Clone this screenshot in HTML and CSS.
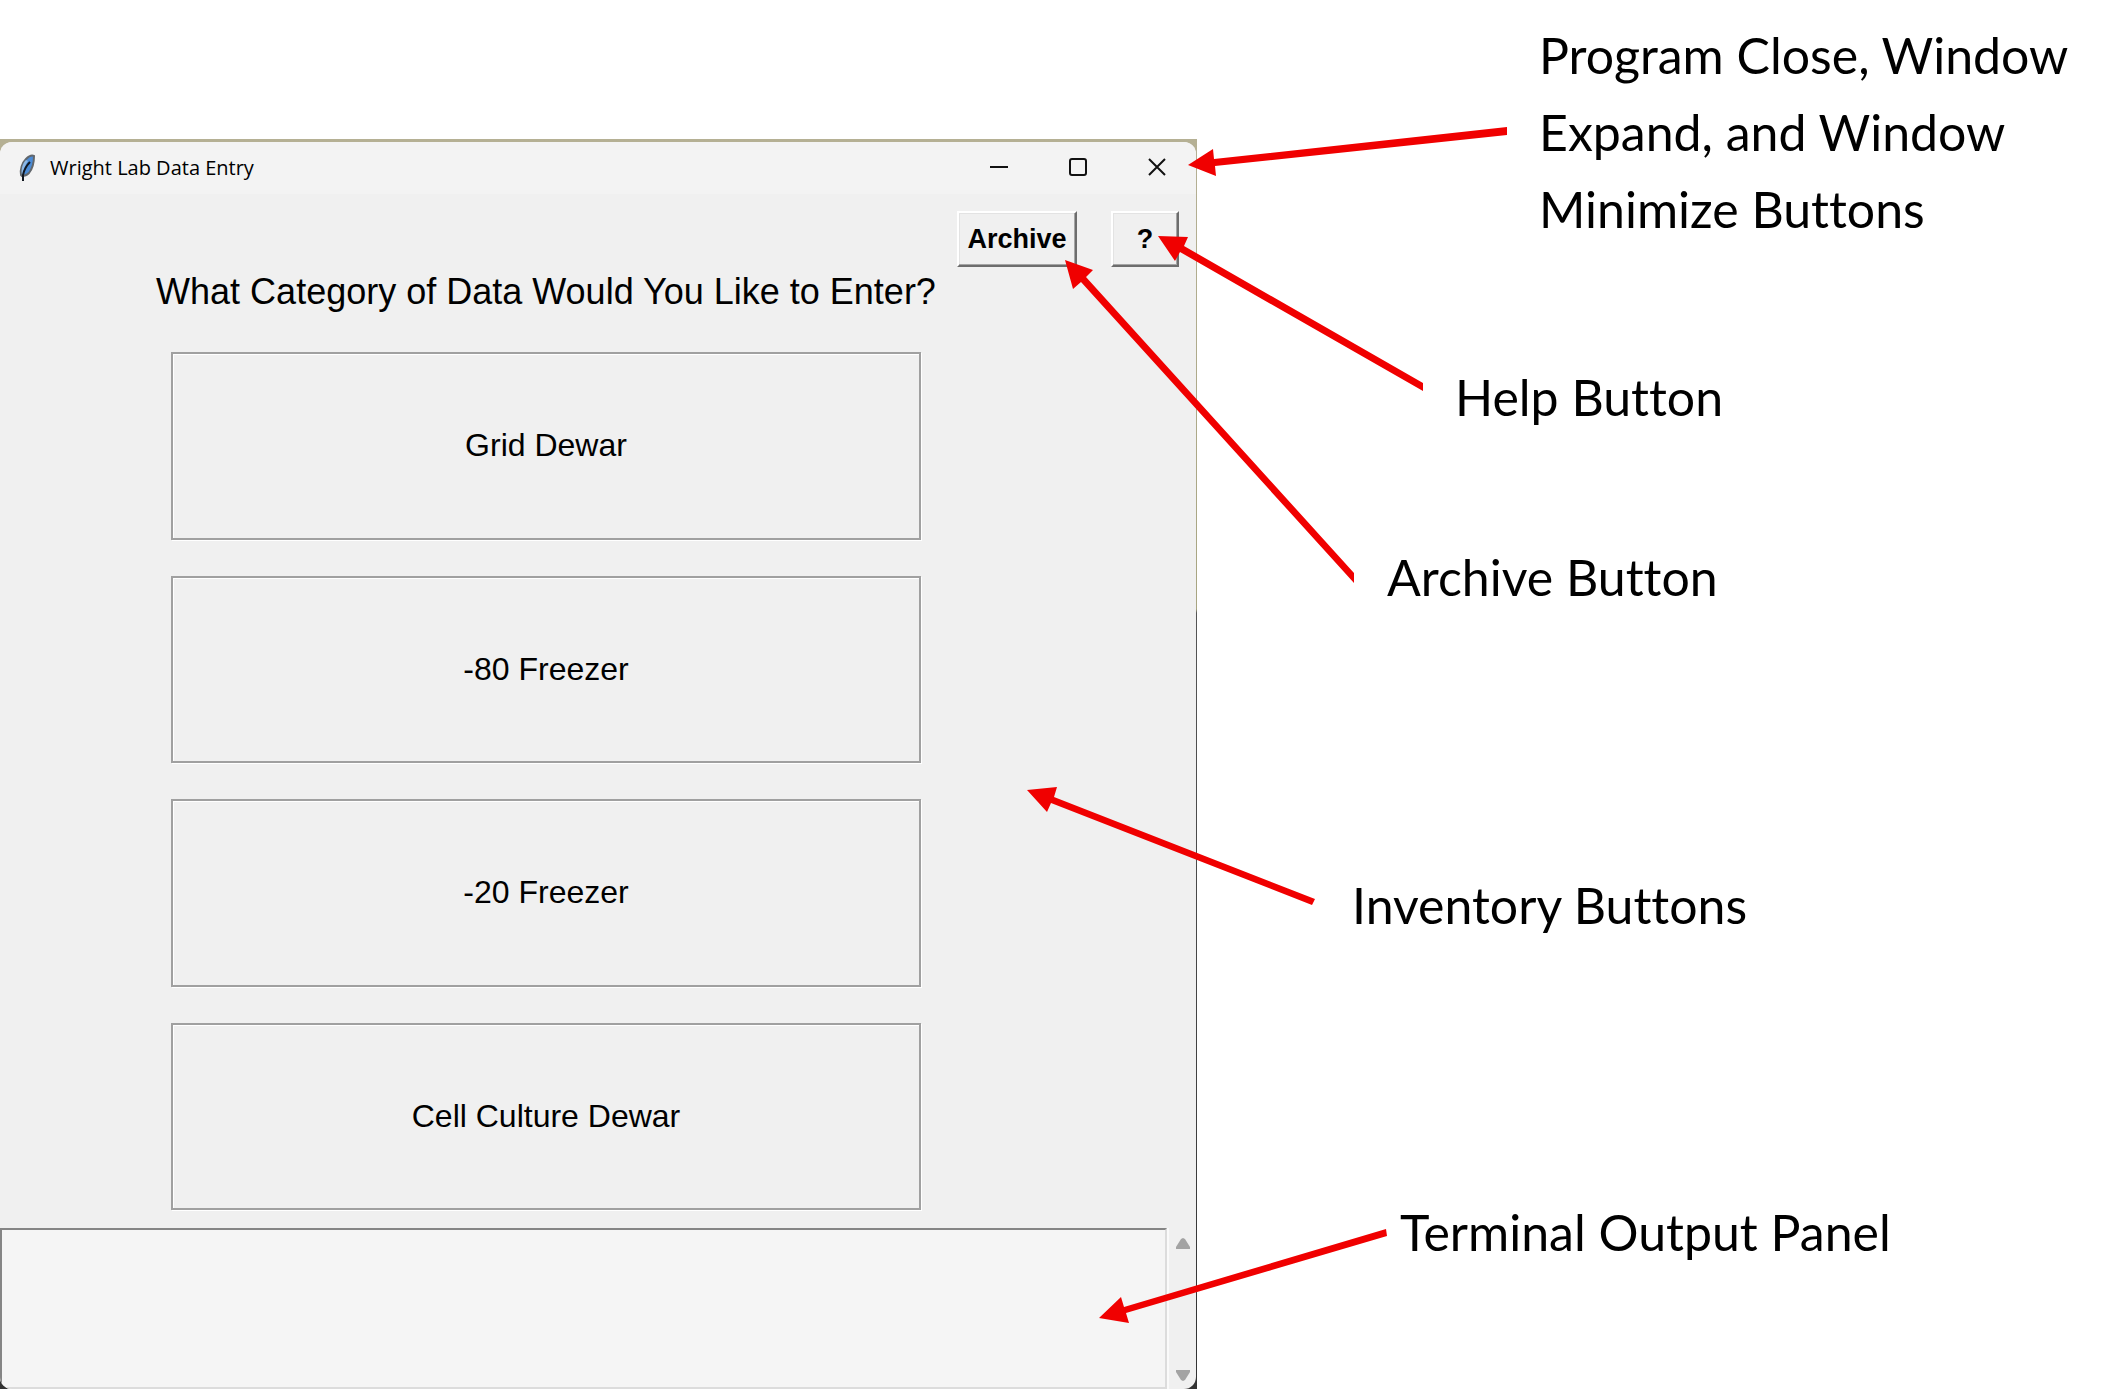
FILE: index.html
```html
<!DOCTYPE html>
<html lang="en">
<head>
<meta charset="utf-8">
<title>Wright Lab Data Entry</title>
<link rel="stylesheet" href="styles.css">
</head>
<body>
<main class="guide">
  <div class="desktop">
    <section class="window">
      <header class="titlebar">
        <svg class="feather" viewBox="0 0 18 30" aria-hidden="true">
          <path d="M3 22C2 17 4 10 8 6C11 3 14 2 16 3C16 9 15 15 11 20C9 22 6 23 4 23Z" fill="#4a8bd6" stroke="#62676c" stroke-width="2"/>
          <path d="M8 7C4 11 3 17 4 22L5 22C5 17 7 12 10 8Z" fill="#8cb8e6"/>
          <path d="M5 28V22C6 17 9 12 12 9" fill="none" stroke="#10161f" stroke-width="2"/>
        </svg>
        <h1 class="title">Wright Lab Data Entry</h1>
        <button class="control" aria-label="Minimize"><svg viewBox="0 0 18 18"><path d="M0 9H18"/></svg></button>
        <button class="control" aria-label="Expand"><svg viewBox="0 0 18 18"><rect x="1" y="1" width="16" height="16" rx="2"/></svg></button>
        <button class="control" aria-label="Close"><svg viewBox="0 0 18 18"><path d="M1 1L17 17M17 1L1 17"/></svg></button>
      </header>
      <div class="toolbar">
        <button class="tool">Archive</button>
        <button class="tool help">?</button>
      </div>
      <h2 class="question">What Category of Data Would You Like to Enter?</h2>
      <div class="inventory">
        <button class="choice">Grid Dewar</button>
        <button class="choice">-80 Freezer</button>
        <button class="choice">-20 Freezer</button>
        <button class="choice">Cell Culture Dewar</button>
      </div>
      <div class="terminal">
        <textarea class="output" aria-label="Terminal output" readonly></textarea>
        <div class="scroll">
          <svg viewBox="0 0 14 11" aria-hidden="true"><path d="M0 11V9L5 1L7 0L9 1L14 9V11Z"/></svg>
          <svg viewBox="0 0 14 11" aria-hidden="true"><path d="M0 0V2L5 10L7 11L9 10L14 2V0Z"/></svg>
        </div>
      </div>
    </section>
  </div>
  <aside class="notes">
    <p class="note note-window">Program Close, Window<br>Expand, and Window<br>Minimize Buttons</p>
    <p class="note note-help">Help Button</p>
    <p class="note note-archive">Archive Button</p>
    <p class="note note-inventory">Inventory Buttons</p>
    <p class="note note-terminal">Terminal Output Panel</p>
  </aside>
  <svg class="arrows" viewBox="0 0 2120 1389" aria-hidden="true">
    <path d="M1188 165L1213 149L1214 159L1507 127V135L1215 166L1216 176Z"/>
    <path d="M1158 236L1188 237L1184 246L1423 383V391L1180 252L1175 261Z"/>
    <path d="M1065 260L1093 270L1086 277L1354 573V583L1081 282L1073 289Z"/>
    <path d="M1027 790L1057 787L1054 797L1315 899L1312 905L1051 803L1047 812Z"/>
    <path d="M1099 1318L1121 1297L1124 1307L1386 1229L1387 1236L1126 1313L1129 1323Z"/>
  </svg>
</main>
</body>
</html>
```
FILE: styles.css
```css
* {
  box-sizing: border-box;
}

body {
  margin: 0;
  background: #fff;
  color: #000;
}

button {
  margin: 0;
  padding: 0;
  color: #000;
  font-family: "Liberation Sans", Arial, sans-serif;
}

.guide {
  position: relative;
  display: grid;
  grid-template-columns: 1197fr 923fr;
  min-height: 100vh;
}

.desktop {
  display: flex;
  margin-top: 139px;
  padding: 3px 1px 0 0;
  background: linear-gradient(#b5b094, #a8a581 470px, #555 474px, #333);
}

.window {
  display: flex;
  flex: 1;
  flex-direction: column;
  overflow: hidden;
  border-radius: 12px;
  background: #f0f0f0;
}

.titlebar {
  display: flex;
  align-items: center;
  height: 52px;
  padding: 0 0 0 18px;
  background: #f3f3f3;
}

.feather {
  width: 18px;
  height: 30px;
}

.title {
  flex: 1;
  margin: 0 0 0 14px;
  font: 400 20px/28px "Open Sans", "Noto Sans", sans-serif;
}

.control {
  width: 79px;
  height: 48px;
  border: 0;
  background: none;
}

.control svg {
  width: 18px;
  height: 18px;
  fill: none;
  stroke: #111;
  stroke-width: 2;
}

.toolbar {
  display: flex;
  justify-content: flex-end;
  gap: 34px;
  padding: 17px 17px 0 0;
}

.tool {
  width: 120px;
  height: 56px;
  border: 2px solid;
  border-color: #fff #6d6d6d #6d6d6d #fff;
  background: #f0f0f0;
  box-shadow: inset -1px -1px #a5a5a5, inset 1px 1px #e3e3e3;
  font-size: 27px;
  font-weight: 700;
}

.help {
  width: 68px;
}

.question {
  width: 750px;
  margin: 5px 0 0 171px;
  display: flex;
  justify-content: center;
  white-space: nowrap;
  font: 400 36px/40px "Liberation Sans", Arial, sans-serif;
}

.inventory {
  display: flex;
  flex: 1;
  flex-direction: column;
  gap: 36px;
  width: 750px;
  margin: 40px 0 18px 171px;
}

.choice {
  flex: 1;
  border: 2px solid #a0a0a0;
  background: #f0f0f0;
  box-shadow: 1px 1px #fff, inset 1px 1px #fff;
  font-size: 32px;
}

.terminal {
  display: flex;
  height: 161px;
}

.output {
  flex: 1;
  border: 2px solid;
  border-color: #858585 #dcdcdc #dcdcdc #858585;
  background: #f5f5f5;
  resize: none;
}

.scroll {
  display: flex;
  flex-direction: column;
  justify-content: space-between;
  align-items: center;
  width: 29px;
  padding: 10px 0 8px;
  border-left: 2px solid #fafafa;
}

.scroll svg {
  width: 14px;
  height: 11px;
  fill: #a3a3a3;
}

.notes {
  display: flex;
  flex-direction: column;
  padding-top: 17px;
}

.note {
  margin: 0;
  white-space: nowrap;
  font: 400 50px/77px Lato, sans-serif;
  font-variant-ligatures: none;
}

.note-window {
  margin-left: 342px;
}

.note-help {
  margin: 111px 0 0 258px;
}

.note-archive {
  margin: 103px 0 0 190px;
}

.note-inventory {
  margin: 251px 0 0 155px;
}

.note-terminal {
  margin: 250px 0 0 203px;
}

.arrows {
  position: absolute;
  top: 0;
  left: 0;
  width: 100%;
  fill: #f00000;
  pointer-events: none;
}
```
